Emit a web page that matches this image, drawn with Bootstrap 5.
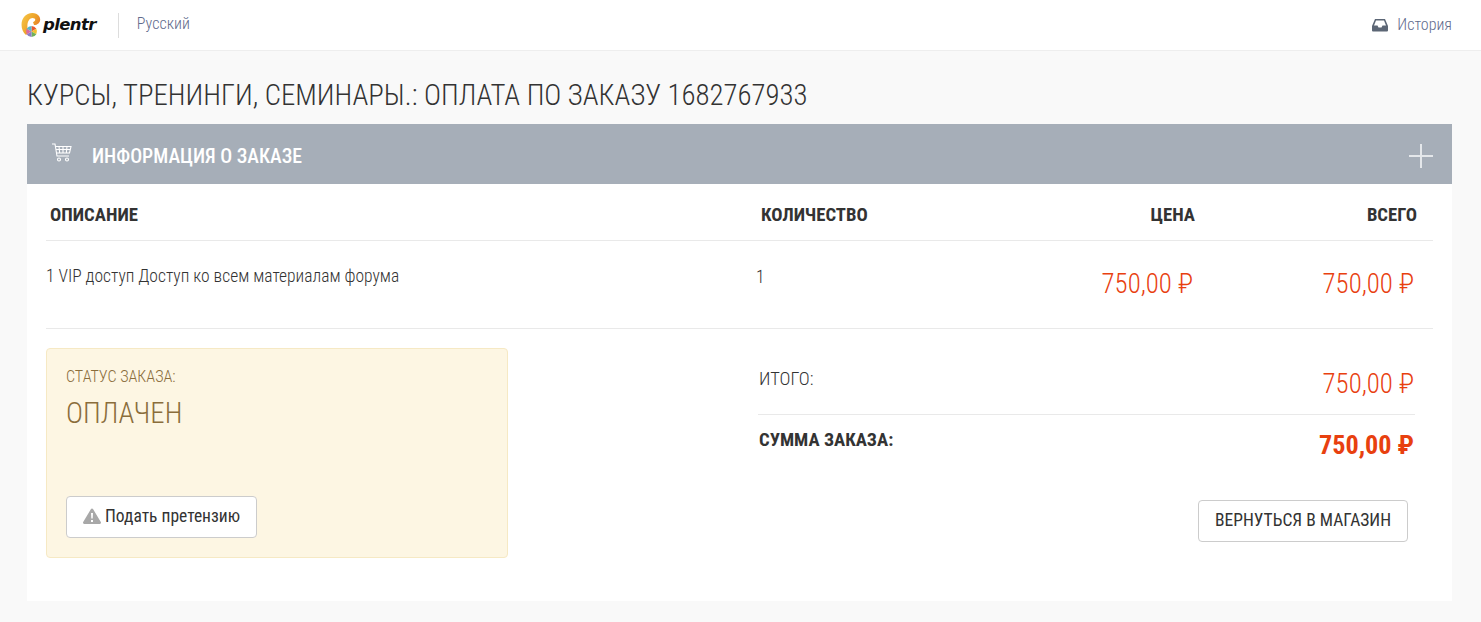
<!DOCTYPE html>
<html lang="ru">

<head>
  <meta charset="UTF-8">
  <meta name="viewport" content="width=device-width, initial-scale=1.0">
  <title>Оплата по заказу</title>
  <link href="https://cdn.jsdelivr.net/npm/bootstrap@5.3.0/dist/css/bootstrap.min.css" rel="stylesheet">
  <style>
    body {
      background-color: #f9f9f9;
      font-family: Roboto, "Liberation Sans", sans-serif;
      font-stretch: 75%;
      color: #333;
    }
    button {
      font-stretch: 75%;
    }
    .top-bar {
      height: 51px;
      background: #fff;
      border-bottom: 1px solid #eee;
      padding: 0 29px 0 21px;
    }
    .logo-word {
      font-family: "DejaVu Sans", sans-serif;
      font-stretch: normal;
      font-weight: 700;
      font-style: italic;
      font-size: 16.5px;
      letter-spacing: -0.6px;
      color: #111;
      margin-left: 1px;
    }
    .lang-link {
      border-left: 1px solid #ddd;
      margin-left: 22px;
      padding-left: 18px;
      height: 25px;
      line-height: 21px;
      font-size: 16px;
      font-weight: 300;
      color: #5f6b8c;
      text-decoration: none;
    }
    .history-link {
      font-size: 16px;
      font-weight: 300;
      color: #5f6b8c;
      text-decoration: none;
    }
    .history-link svg {
      margin-right: 1px;
    }
    .page-wrap {
      padding: 27px 29px 0 27px;
    }
    .page-head {
      font-size: 28.8px;
      font-weight: 300;
      line-height: 35px;
      margin: 0 0 11px;
      color: #333;
    }
    .order-panel {
      background: #fff;
      height: 477px;
    }
    .panel-top {
      height: 60px;
      background: #a6aeb8;
      color: #fff;
      padding: 0 19px 0 24px;
    }
    .panel-top-title {
      font-size: 19.8px;
      font-weight: 500;
      margin: 6px 0 0 20px;
    }
    .cart-mark {
      margin-top: -3px;
    }
    .plus-mark {
      width: 24px;
      height: 24px;
      margin-top: 4px;
    }
    .panel-body-in {
      padding: 0 19px;
    }
    .col-desc { width: 712px; }
    .col-qty { width: 250px; }
    .col-price { width: 188px; text-align: right; }
    .col-total { width: 222px; text-align: right; }
    .head-row {
      height: 57px;
      border-bottom: 1px solid #e9e9e9;
      font-size: 18.7px;
      font-weight: 700;
      color: #333;
      padding-left: 4px;
      padding-top: 7px;
    }
    .head-row .col-desc { width: 711px; }
    .head-row .col-qty { width: 246px; }
    .item-row {
      height: 88px;
      border-bottom: 1px solid #e9e9e9;
      font-size: 17.5px;
      font-weight: 300;
    }
    .item-row .col-desc, .item-row .col-qty { padding-top: 24px; line-height: 22px; }
    .item-row .col-qty { padding-top: 25px; margin-left: -2px; margin-right: 2px; }
    .item-row .col-price, .item-row .col-total { padding-top: 27px; }
    .item-row .col-price { padding-right: 3px; }
    .item-row .col-total { padding-right: 4px; }
    .price-text {
      font-size: 26.8px;
      font-weight: 300;
      line-height: 32px;
      color: #e8400f;
    }
    .status-box {
      width: 462px;
      height: 210px;
      margin-top: 19px;
      padding: 18px 19px;
      background: #fdf6e3;
      border: 1px solid #f6e9c4;
      border-radius: 4px;
      color: #8a6d3b;
    }
    .status-label {
      font-size: 16.100px;
      font-weight: 300;
      line-height: 20px;
    }
    .status-value {
      font-size: 28.8px;
      font-weight: 300;
      line-height: 34px;
      margin-top: 9px;
    }
    .claim-btn {
      margin-top: 66px;
      height: 42px;
      padding: 0 16px 2px;
      background: #fff;
      border: 1px solid #ccc;
      border-radius: 4px;
      font-size: 17.5px;
      color: #333;
    }
    .totals-side {
      width: 657px;
      margin-left: 250px;
    }
    .totals-row {
      border-bottom: 1px solid #e9e9e9;
      height: 86px;
      padding: 39px 1px 0 1px;
    }
    .totals-label {
      font-size: 18.5px;
      font-weight: 300;
      line-height: 22px;
    }
    .sum-row {
      height: 68px;
      padding: 13px 1px 0 1px;
    }
    .sum-label {
      font-size: 18.7px;
      font-weight: 700;
      line-height: 24px;
    }
    .sum-price {
      font-size: 26.2px;
      font-weight: 700;
      line-height: 32px;
      color: #e8400f;
      margin-top: 1px;
    }
    .back-btn {
      height: 42px;
      margin-top: 17px;
      margin-right: 7px;
      padding: 0 16px 2px;
      background: #fff;
      border: 1px solid #ccc;
      border-radius: 4px;
      font-size: 17.5px;
      color: #333;
    }
  </style>
</head>

<body>
  <div class="top-bar d-flex align-items-center justify-content-between">
    <div class="d-flex align-items-center">
      <svg width="21" height="25" viewBox="0 0 21 25">
        <defs>
          <linearGradient id="logoRing" x1="0" y1="0" x2="1" y2="0.600">
            <stop offset="0" stop-color="#f7c948"/>
            <stop offset="0.600" stop-color="#eda32a"/>
            <stop offset="1" stop-color="#e5782b"/>
          </linearGradient>
        </defs>
        <path d="M5 22C0 18-1 9 3 4C7-1 15-1 18 3C21 7 18 12 13 12L12 9C14 8.500 15 6.500 13.500 5.500C10 3.500 7 7 6.500 11C6.200 14 6.500 17 8 19Z" fill="url(#logoRing)"/>
        <path d="M10.500 18.500V13a5.500 5.500 0 0 1 4.800 2.800Z" fill="#e8572f"/>
        <path d="M10.500 18.500l4.800-2.700a5.500 5.500 0 0 1 0 5.400Z" fill="#f2c230"/>
        <path d="M10.500 18.500l4.800 2.700a5.500 5.500 0 0 1-4.800 2.800Z" fill="#6fb05a"/>
        <path d="M10.500 18.500V24a5.500 5.500 0 0 1-4.800-2.800Z" fill="#8a7fc4"/>
        <path d="M10.500 18.500l-4.800 2.700a5.500 5.500 0 0 1 0-5.400Z" fill="#d96aa0"/>
        <path d="M10.500 18.500l-4.800-2.700a5.500 5.500 0 0 1 4.800-2.800Z" fill="#58b6c9"/>
      </svg>
      <span class="logo-word">plentr</span>
      <a href="#" class="lang-link">Русский</a>
    </div>
    <a href="#" class="history-link d-flex align-items-center gap-2">
      <svg width="16" height="14" viewBox="0 0 16 14"><path d="M3 1h10l3 7v4.500a1 1 0 0 1-1 1H1a1 1 0 0 1-1-1V8ZM4 2.500 2 7.500h3.500l1 2h3l1-2H14l-2-5Z" fill="#5c6675" fill-rule="evenodd"/></svg>
      История
    </a>
  </div>

  <div class="page-wrap">
    <h1 class="page-head">КУРСЫ, ТРЕНИНГИ, СЕМИНАРЫ.: ОПЛАТА ПО ЗАКАЗУ 1682767933</h1>
    <div class="order-panel">
      <div class="panel-top d-flex align-items-center justify-content-between">
        <div class="d-flex align-items-center">
          <svg class="cart-mark" width="21" height="19" viewBox="0 0 21 19" fill="none" stroke="#fff" stroke-width="1.100">
            <path d="M1 1h3l2 12h12"/>
            <path d="M4.500 3.500H20l-1.500 6.500H6M8 3.500l.7 6.500M12 3.500v6.500M16 3.500l-.7 6.500M5 6.500h14.500"/>
            <circle cx="8" cy="16.500" r="1.500"/>
            <circle cx="16" cy="16.500" r="1.500"/>
          </svg>
          <h2 class="panel-top-title">ИНФОРМАЦИЯ О ЗАКАЗЕ</h2>
        </div>
        <svg class="plus-mark" viewBox="0 0 24 24"><path d="M12 0v24M0 12h24" stroke="#e4e7ea" stroke-width="2"/></svg>
      </div>
      <div class="panel-body-in">
        <div class="head-row d-flex align-items-center">
          <div class="col-desc">ОПИСАНИЕ</div>
          <div class="col-qty">КОЛИЧЕСТВО</div>
          <div class="col-price">ЦЕНА</div>
          <div class="col-total">ВСЕГО</div>
        </div>
        <div class="item-row d-flex">
          <div class="col-desc">1 VIP доступ Доступ ко всем материалам форума</div>
          <div class="col-qty">1</div>
          <div class="col-price"><span class="price-text">750,00 ₽</span></div>
          <div class="col-total"><span class="price-text">750,00 ₽</span></div>
        </div>
        <div class="d-flex">
          <div class="status-box">
            <div class="status-label">СТАТУС ЗАКАЗА:</div>
            <div class="status-value">ОПЛАЧЕН</div>
            <button type="button" class="claim-btn d-inline-flex align-items-center gap-1">
              <svg width="18" height="16" viewBox="0 0 18 16"><path d="M9 0.500a1.200 1.200 0 0 1 1 .6l7.800 13a1.200 1.200 0 0 1-1 1.800H1.200a1.200 1.200 0 0 1-1-1.800L8 1.100a1.200 1.200 0 0 1 1-.6ZM8 5l.3 5.500h1.400L10 5ZM8 12v2h2v-2Z" fill="#a8a8a8" fill-rule="evenodd"/></svg>
              Подать претензию
            </button>
          </div>
          <div class="totals-side">
            <div class="totals-row d-flex justify-content-between">
              <div class="totals-label">ИТОГО:</div>
              <div class="price-text">750,00 ₽</div>
            </div>
            <div class="sum-row d-flex justify-content-between">
              <div class="sum-label">СУММА ЗАКАЗА:</div>
              <div class="sum-price">750,00 ₽</div>
            </div>
            <div class="d-flex justify-content-end">
              <button type="button" class="back-btn">ВЕРНУТЬСЯ В МАГАЗИН</button>
            </div>
          </div>
        </div>
      </div>
    </div>
  </div>

  <script src="https://cdn.jsdelivr.net/npm/bootstrap@5.3.0/dist/js/bootstrap.bundle.min.js"></script>
</body>
</html>
